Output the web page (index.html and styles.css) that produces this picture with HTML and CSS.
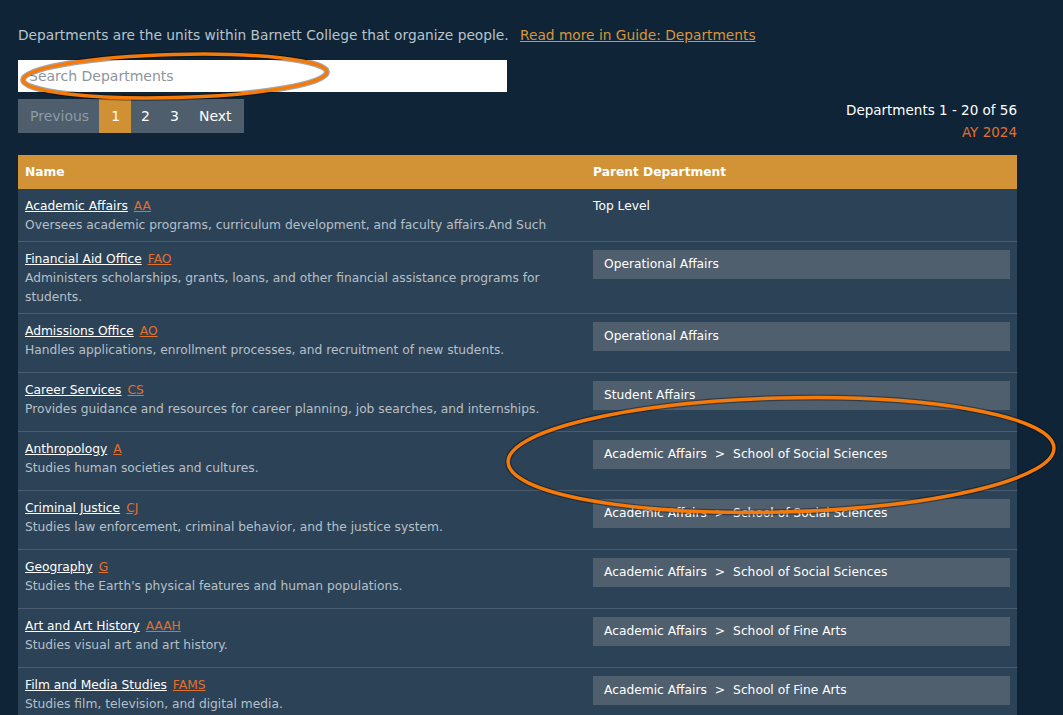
FILE: index.html
```html
<!DOCTYPE html>
<html lang="en">
<head>
<meta charset="utf-8">
<title>Departments</title>
<link rel="stylesheet" href="styles.css">
</head>
<body>
<div class="page">
  <p class="intro">Departments are the units within Barnett College that organize people. <a class="guide" href="#">Read more in Guide: Departments</a></p>
  <input class="search" type="text" placeholder="Search Departments">
  <div class="toolbar">
    <div class="pager">
      <span class="pg disabled">Previous</span>
      <span class="pg current">1</span>
      <span class="pg">2</span>
      <span class="pg">3</span>
      <span class="pg next">Next</span>
    </div>
    <div class="info">
      <div class="count">Departments 1 - 20 of 56</div>
      <div class="year">AY 2024</div>
    </div>
  </div>
  <table class="depts">
    <colgroup><col class="col-name"><col class="col-parent"></colgroup>
    <thead>
      <tr><th>Name</th><th>Parent Department</th></tr>
    </thead>
    <tbody>
      <tr>
        <td><a class="dname" href="#">Academic Affairs</a><a class="code" href="#">AA</a><div class="desc">Oversees academic programs, curriculum development, and faculty affairs.And Such</div></td>
        <td><div class="top">Top Level</div></td>
      </tr>
      <tr>
        <td><a class="dname" href="#">Financial Aid Office</a><a class="code" href="#">FAO</a><div class="desc">Administers scholarships, grants, loans, and other financial assistance programs for students.</div></td>
        <td><div class="parent">Operational Affairs</div></td>
      </tr>
      <tr>
        <td><a class="dname" href="#">Admissions Office</a><a class="code" href="#">AO</a><div class="desc">Handles applications, enrollment processes, and recruitment of new students.</div></td>
        <td><div class="parent">Operational Affairs</div></td>
      </tr>
      <tr>
        <td><a class="dname" href="#">Career Services</a><a class="code" href="#">CS</a><div class="desc">Provides guidance and resources for career planning, job searches, and internships.</div></td>
        <td><div class="parent">Student Affairs</div></td>
      </tr>
      <tr>
        <td><a class="dname" href="#">Anthropology</a><a class="code" href="#">A</a><div class="desc">Studies human societies and cultures.</div></td>
        <td><div class="parent">Academic Affairs<span class="sep">&gt;</span>School of Social Sciences</div></td>
      </tr>
      <tr>
        <td><a class="dname" href="#">Criminal Justice</a><a class="code" href="#">CJ</a><div class="desc">Studies law enforcement, criminal behavior, and the justice system.</div></td>
        <td><div class="parent">Academic Affairs<span class="sep">&gt;</span>School of Social Sciences</div></td>
      </tr>
      <tr>
        <td><a class="dname" href="#">Geography</a><a class="code" href="#">G</a><div class="desc">Studies the Earth's physical features and human populations.</div></td>
        <td><div class="parent">Academic Affairs<span class="sep">&gt;</span>School of Social Sciences</div></td>
      </tr>
      <tr>
        <td><a class="dname" href="#">Art and Art History</a><a class="code" href="#">AAAH</a><div class="desc">Studies visual art and art history.</div></td>
        <td><div class="parent">Academic Affairs<span class="sep">&gt;</span>School of Fine Arts</div></td>
      </tr>
      <tr>
        <td><a class="dname" href="#">Film and Media Studies</a><a class="code" href="#">FAMS</a><div class="desc">Studies film, television, and digital media.</div></td>
        <td><div class="parent">Academic Affairs<span class="sep">&gt;</span>School of Fine Arts</div></td>
      </tr>
    </tbody>
  </table>
</div>
<svg class="marks" width="1063" height="715" viewBox="0 0 1063 715" aria-hidden="true">
  <ellipse class="mark-shadow" cx="175" cy="76" rx="152" ry="21.5" transform="rotate(-1.5 175 76)"/>
  <ellipse class="mark" cx="175" cy="76" rx="152" ry="21.5" transform="rotate(-1.5 175 76)"/>
  <ellipse class="mark-shadow" cx="781" cy="455" rx="273" ry="57" transform="rotate(-1.5 781 455)"/>
  <ellipse class="mark" cx="781" cy="455" rx="273" ry="57" transform="rotate(-1.5 781 455)"/>
</svg>
</body>
</html>
```

FILE: styles.css
```css
html, body {
  margin: 0;
  padding: 0;
  background: #0f2537;
  height: 100%;
  overflow: hidden;
}
body {
  font-family: "DejaVu Sans", "Open Sans", sans-serif;
  color: #ffffff;
  position: relative;
}
.page {
  padding: 25px 46px 0 18px;
}
.intro {
  margin: 0;
  font-size: 13.75px;
  line-height: 20px;
  color: #b9c3cd;
}
.guide {
  color: #d8953a;
  margin-left: 7px;
}
.search {
  display: block;
  box-sizing: border-box;
  width: 489px;
  height: 32px;
  margin-top: 15px;
  border: none;
  outline: none;
  padding: 0 11px;
  font-family: inherit;
  font-size: 14px;
  color: #333;
  background: #ffffff;
}
.search::placeholder {
  color: #8d959c;
}
.toolbar {
  display: flex;
  justify-content: space-between;
  align-items: flex-start;
  margin-top: 7px;
}
.pager {
  display: flex;
}
.pg {
  display: block;
  height: 34px;
  line-height: 34px;
  padding: 0 10px;
  font-size: 14px;
  background: #4e5e6c;
  color: #ffffff;
}
.pg.disabled {
  color: #8e9aa5;
  padding: 0 10px 0 12px;
}
.pg.current {
  background: #d09135;
  padding: 0 11px 0 12px;
}
.pg.next {
  padding: 0 12px 0 10px;
}
.info {
  text-align: right;
  font-size: 13.5px;
  line-height: 22px;
}
.count {
  color: #ffffff;
}
.year {
  color: #e2702c;
}
.depts {
  width: 100%;
  table-layout: fixed;
  margin-top: 12px;
  border-collapse: collapse;
  background: #2c4256;
  font-size: 12.25px;
}
.col-name {
  width: 568px;
}
.depts th {
  background: #d29337;
  color: #ffffff;
  text-align: left;
  font-weight: bold;
  height: 34px;
  padding: 0 7px;
  box-sizing: border-box;
}
.depts td {
  vertical-align: top;
  padding: 8px 7px 6px;
  border-top: 1px solid #4a5d6f;
  line-height: 19px;
}
.depts tbody tr:first-child td {
  border-top: none;
}
.dname {
  color: #ffffff;
}
.code {
  color: #e2702c;
  margin-left: 6px;
}
.desc {
  color: #b7c0c9;
}
.top {
  color: #ffffff;
}
.parent {
  background: #4f5f6e;
  color: #ffffff;
  height: 29px;
  line-height: 29px;
  padding: 0 11px;
  margin: 0 0 15px;
}
.sep {
  margin: 0 8px;
}
.marks {
  position: absolute;
  left: 0;
  top: 0;
  pointer-events: none;
}
.mark {
  fill: none;
  stroke: #f57a0a;
  stroke-width: 3.5;
}
.mark-shadow {
  fill: none;
  stroke: rgba(0, 0, 0, 0.35);
  stroke-width: 6;
}
```
